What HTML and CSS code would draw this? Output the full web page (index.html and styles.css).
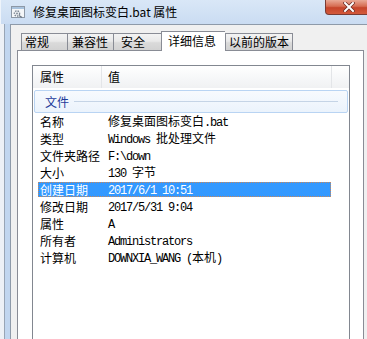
FILE: index.html
```html
<!DOCTYPE html>
<html lang="zh-CN">
<head>
    <meta charset="UTF-8">
    <title>修复桌面图标变白.bat 属性</title>
    <link rel="stylesheet" href="styles.css">
</head>
<body>
    <div class="window">
        <div class="titlebar">
            <svg class="app-icon" width="14" height="14" viewBox="0 0 14 14">
                <rect x="0.5" y="1.5" width="13" height="11" fill="#f4f6f8" stroke="#8d98a6"/>
                <rect x="1" y="2" width="12" height="2" fill="#a9c3de"/>
                <circle cx="6" cy="8.5" r="2.6" fill="none" stroke="#7b8694" stroke-width="1.4" stroke-dasharray="1.5 1"/>
                <circle cx="6" cy="8.5" r="0.9" fill="#7b8694"/>
                <line x1="8" y1="10.5" x2="11" y2="12.5" stroke="#6d7885" stroke-width="1.4"/>
            </svg>
            <span class="title">修复桌面图标变白.bat 属性</span>
            <div class="close-btn">
                <svg width="12" height="10" viewBox="0 0 12 10">
                    <path d="M2 1 L10 9 M10 1 L2 9" stroke="#6b2a22" stroke-width="3.4" stroke-linecap="square"/>
                    <path d="M2 1 L10 9 M10 1 L2 9" stroke="#ffffff" stroke-width="2" stroke-linecap="square"/>
                </svg>
            </div>
        </div>

        <div class="frame">
            <div class="frame-left"></div>
            <div class="client">
                <div class="tabs">
                    <div class="tab t1">常规</div>
                    <div class="tab t2">兼容性</div>
                    <div class="tab t3">安全</div>
                    <div class="tab active">详细信息</div>
                    <div class="tab t5">以前的版本</div>
                </div>
                <div class="panel">
                    <div class="listview">
                        <div class="lv-header">
                            <div class="col col-key">属性</div>
                            <div class="col col-val">值</div>
                            <div class="col col-rest"></div>
                        </div>
                        <div class="group">
                            <span class="group-name">文件</span>
                            <span class="group-line"></span>
                        </div>
                        <div class="row"><div class="cells"><span class="k">名称</span><span class="v">修复桌面图标变白<span class="m">.bat</span></span></div></div>
                        <div class="row"><div class="cells"><span class="k">类型</span><span class="v"><span class="m">Windows </span>批处理文件</span></div></div>
                        <div class="row"><div class="cells"><span class="k">文件夹路径</span><span class="v"><span class="m">F:\down</span></span></div></div>
                        <div class="row"><div class="cells"><span class="k">大小</span><span class="v"><span class="m">130 </span>字节</span></div></div>
                        <div class="row sel"><div class="cells"><span class="k">创建日期</span><span class="v"><span class="m">2017/6/1 10:51</span></span></div></div>
                        <div class="row"><div class="cells"><span class="k">修改日期</span><span class="v"><span class="m">2017/5/31 9:04</span></span></div></div>
                        <div class="row"><div class="cells"><span class="k">属性</span><span class="v"><span class="m">A</span></span></div></div>
                        <div class="row"><div class="cells"><span class="k">所有者</span><span class="v"><span class="m">Administrators</span></span></div></div>
                        <div class="row"><div class="cells"><span class="k">计算机</span><span class="v"><span class="m">DOWNXIA_WANG (</span>本机<span class="m">)</span></span></div></div>
                    </div>
                </div>
            </div>
        </div>
    </div>
</body>
</html>
```

FILE: styles.css
```css
body {
    margin: 0;
    width: 367px;
    height: 339px;
    overflow: hidden;
    background: #f0f0f0;
    font-family: "Noto Sans CJK SC", "Liberation Sans", sans-serif;
    font-size: 12px;
    color: #000;
}

.window {
    width: 367px;
}

/* title bar */
.titlebar {
    height: 24px;
    display: flex;
    align-items: flex-start;
    background: linear-gradient(#d9e7f7, #cadcf2);
    box-shadow: inset 1px 0 0 #eef4fb;
    overflow: hidden;
}

.app-icon {
    margin: 5px 0 0 11px;
    flex-shrink: 0;
}

.title {
    margin: 4px 0 0 8px;
    line-height: 16px;
    white-space: nowrap;
}

.close-btn {
    margin-left: auto;
    margin-right: -6px;
    width: 46px;
    height: 14px;
    flex-shrink: 0;
    display: flex;
    justify-content: center;
    align-items: center;
    border: 1px solid #7a3b33;
    border-top: none;
    border-radius: 0 0 0 4px;
    background: linear-gradient(#e9a996, #d66c52 45%, #c6442a 55%, #d35a3c);
}

/* window body */
.frame {
    display: flex;
    height: 315px;
}

.frame-left {
    width: 10px;
    flex-shrink: 0;
    background: linear-gradient(to right, #edf1f6 0 4px, #98a5b5 4px 5px, #c1d6ef 5px 10px);
}

.client {
    flex: 1;
    border-left: 1px solid #8e9aa9;
    border-top: 1px solid #8e9aa9;
    padding: 6px 0 0 6px;
    overflow: hidden;
}

/* tabs */
.tabs {
    display: flex;
    align-items: flex-end;
    height: 19px;
    padding-left: 4px;
    position: relative;
    z-index: 1;
}

.tab {
    box-sizing: border-box;
    height: 17px;
    border: 1px solid #898c95;
    border-right: none;
    border-bottom: none;
    background: linear-gradient(#f3f3f3, #e9e9e9 45%, #dadada 55%, #d2d2d2);
    line-height: 16px;
    white-space: nowrap;
}

.t1 { width: 46px; padding-left: 3px; }
.t2 { width: 46px; padding-left: 4px; }
.t3 { width: 48px; padding-left: 7px; }
.t5 { width: 68px; padding-left: 3px; border-right: 1px solid #898c95; }

.tab.active {
    width: 64px;
    height: 20px;
    margin-bottom: -1px;
    padding-left: 6px;
    background: #fff;
    line-height: 18px;
}

.panel {
    box-sizing: border-box;
    width: 347px;
    height: 300px;
    border: 1px solid #898c95;
    background: #fff;
    padding: 14px 0 0 14px;
}

/* list view */
.listview {
    box-sizing: border-box;
    width: 318px;
    height: 290px;
    border: 1px solid #828790;
    background: #fff;
}

.lv-header {
    display: flex;
    height: 22px;
    background: linear-gradient(#ffffff, #f7f8f9 50%, #f0f1f3);
}

.col {
    box-sizing: border-box;
    line-height: 22px;
    border-right: 1px solid #e3e5e8;
}

.col-key { width: 69px; padding-left: 7px; }
.col-val { width: 230px; padding-left: 6px; }
.col-rest { flex: 1; border-right: none; }

.group {
    box-sizing: border-box;
    display: flex;
    align-items: center;
    width: 314px;
    height: 23px;
    margin: 2px 0 0 1px;
    padding: 0 9px 0 10px;
    border: 1px solid #b9d4f3;
    border-radius: 2px;
    background: linear-gradient(#f7fafe, #ebf3fc);
}

.group-name {
    color: #1e3b9a;
    line-height: 16px;
}

.group-line {
    flex: 1;
    height: 1px;
    margin-left: 5px;
    background: #c5d4e6;
}

.row {
    height: 17px;
    display: flex;
    align-items: center;
    padding-left: 5px;
}

.cells {
    box-sizing: border-box;
    display: flex;
    align-items: center;
    width: 293px;
    height: 15px;
    white-space: nowrap;
}

.k {
    width: 70px;
    padding-left: 2px;
    box-sizing: border-box;
    line-height: 15px;
}

.v {
    line-height: 15px;
}

.m {
    font-family: "Liberation Mono", monospace;
    letter-spacing: -1.2px;
}

.row.sel .cells {
    background: #3399ff;
    color: #fff;
    outline: 1px dotted #c9875a;
    outline-offset: -1px;
}
```
